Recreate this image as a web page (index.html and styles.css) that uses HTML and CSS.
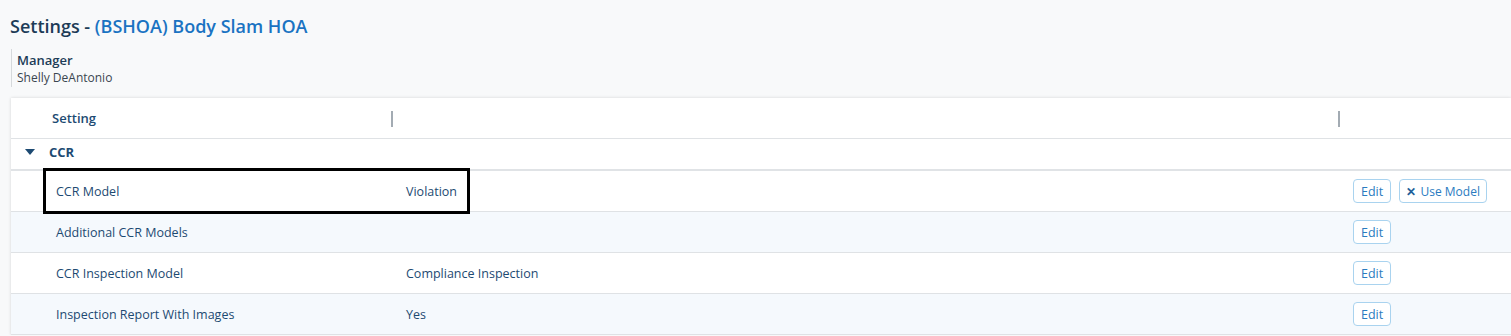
FILE: index.html
```html
<!DOCTYPE html>
<html lang="en">
<head>
  <meta charset="UTF-8" />
  <title>Settings</title>
  <link rel="stylesheet" href="styles.css">
</head>
<body>

  <h1 class="page-title">Settings - <a href="#" class="assoc-link">(BSHOA) Body Slam HOA</a></h1>

  <div class="manager">
    <div class="manager-label">Manager</div>
    <div class="manager-name">Shelly DeAntonio</div>
  </div>

  <div class="grid-card">
    <table class="grid">
      <thead>
        <tr>
          <th class="col-name"><span class="th-text">Setting</span><span class="col-sep"></span></th>
          <th class="col-value"><span class="col-sep"></span></th>
          <th class="col-actions"></th>
        </tr>
      </thead>
      <tbody>
        <tr class="group-row">
          <td colspan="3"><span class="caret"></span>CCR</td>
        </tr>
        <tr class="highlight">
          <td class="cell-name">CCR Model</td>
          <td class="cell-value">Violation</td>
          <td class="cell-actions">
            <button class="btn">Edit</button>
            <button class="btn btn-use"><span class="x">&#10005;</span>Use Model</button>
          </td>
        </tr>
        <tr class="alt">
          <td class="cell-name">Additional CCR Models</td>
          <td class="cell-value"></td>
          <td class="cell-actions"><button class="btn">Edit</button></td>
        </tr>
        <tr>
          <td class="cell-name">CCR Inspection Model</td>
          <td class="cell-value">Compliance Inspection</td>
          <td class="cell-actions"><button class="btn">Edit</button></td>
        </tr>
        <tr class="alt">
          <td class="cell-name">Inspection Report With Images</td>
          <td class="cell-value">Yes</td>
          <td class="cell-actions"><button class="btn">Edit</button></td>
        </tr>
      </tbody>
    </table>
    <div class="focus-box"></div>
  </div>

</body>
</html>
```

FILE: styles.css
```css
body {
  font-family: "Open Sans", "Noto Sans", sans-serif;
  background-color: #f8f9fa;
  margin: 0;
  padding: 10px 0 0 10px;
  color: #2d3e50;
}

.page-title {
  font-size: 18px;
  font-weight: 600;
  color: #1d3c57;
  margin: 3px 0 10px 0;
  line-height: 26px;
}

.assoc-link {
  color: #1a73c2;
  text-decoration: none;
}

.manager {
  margin-left: 1px;
  border-left: 1px solid #d6d9dc;
  padding: 2px 0 2px 5px;
  height: 34px;
}

.manager-label {
  font-size: 13px;
  font-weight: 600;
  color: #1d3c57;
  line-height: 18px;
}

.manager-name {
  font-size: 12px;
  color: #3b4650;
  line-height: 17px;
}

.grid-card {
  position: relative;
  margin: 11px 0 0 1px;
  background-color: #fff;
  box-shadow: 0 0 3px rgba(0,0,0,0.15);
}

.grid {
  width: 100%;
  border-collapse: collapse;
  font-size: 12.5px;
}

.grid th {
  text-align: left;
  font-weight: 600;
  font-size: 13px;
  color: #1d4a72;
  height: 40px;
  padding: 0;
  border-bottom: 1px solid #dfe2e5;
  position: relative;
}

.col-name {
  width: 382px;
}

.col-value {
  width: 947px;
}

.th-text {
  padding-left: 41px;
}

.col-sep {
  position: absolute;
  right: 0;
  top: 13px;
  width: 2px;
  height: 16px;
  background-color: #a3abb3;
}

.group-row td {
  height: 25px;
  padding: 0 0 5px 14px;
  font-weight: 700;
  font-size: 13px;
  color: #2d3e50;
  border-bottom: 2px solid #e0e3e6;
}

.caret {
  display: inline-block;
  width: 0;
  height: 0;
  border-left: 5px solid transparent;
  border-right: 5px solid transparent;
  border-top: 6px solid #1d4a72;
  margin-right: 14px;
  vertical-align: 2px;
}

.grid td {
  color: #1d4a72;
}

tbody tr:not(.group-row) td {
  height: 40px;
  padding: 0;
  border-bottom: 1px solid #dfe2e5;
}

tr.alt td {
  background-color: #f5f9fd;
}

.cell-name {
  padding-left: 45px !important;
}

.cell-value {
  padding-left: 13px !important;
}

.cell-actions {
  padding-left: 13px !important;
  white-space: nowrap;
}

.btn {
  font-family: "Open Sans", "Noto Sans", sans-serif;
  font-size: 12.5px;
  color: #2a7bbf;
  background-color: #fff;
  border: 1px solid #a9d3ef;
  border-radius: 4px;
  height: 24px;
  padding: 0 7px;
  margin-right: 5px;
  cursor: pointer;
}

.btn-use {
  padding: 0 6px;
  font-size: 12px;
}

.x {
  font-size: 12px;
  font-weight: 700;
  margin-right: 4px;
  color: #1d5f99;
}

.focus-box {
  position: absolute;
  left: 32px;
  top: 70px;
  width: 421px;
  height: 40px;
  border: 3px solid #000;
}
```
